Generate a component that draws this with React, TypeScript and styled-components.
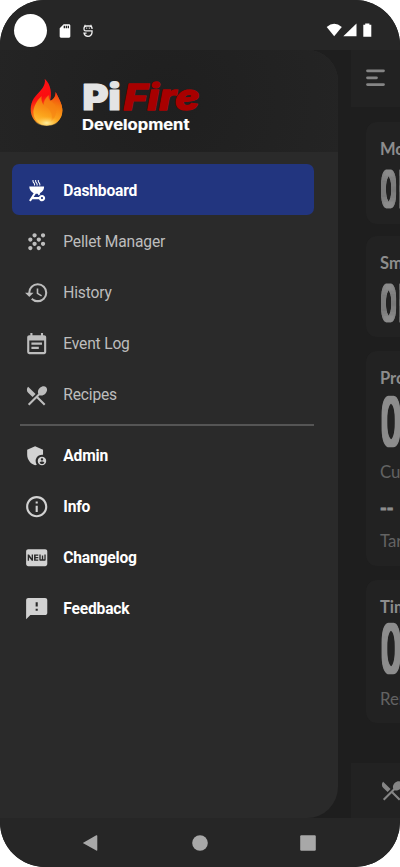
import React from "react";
import styled, { createGlobalStyle, css } from "styled-components";
import {
  MdAdminPanelSettings,
  MdEventNote,
  MdFeedback,
  MdFiberNew,
  MdGrain,
  MdHistory,
  MdInfoOutline,
  MdOutdoorGrill,
  MdRestaurantMenu,
  MdSdCard,
} from "react-icons/md";

const GlobalStyle = createGlobalStyle`
  * { box-sizing: border-box; }
  body { margin: 0; background: #fff; font-family: Roboto, "Liberation Sans", sans-serif; }
`;

const Phone = styled.div`
  width: 400px;
  height: 867px;
  display: flex;
  flex-direction: column;
  overflow: hidden;
  border-radius: 45px;
  background: #1e1e1e;
`;

const StatusBar = styled.header`
  flex: 0 0 50px;
  display: flex;
  align-items: flex-start;
  padding: 14px 28px 0 14px;
  background: #262626;
  color: #fff;
`;

const Camera = styled.div`
  width: 33px;
  height: 33px;
  margin-right: 10px;
  border-radius: 50%;
  background: #fff;
`;

const StatusGroup = styled.div<{ $end?: boolean }>`
  display: flex;
  align-items: center;
  height: 33px;
  gap: ${(p) => (p.$end ? 0 : 9)}px;
  ${(p) => p.$end && css`margin-left: auto;`}
  svg { display: block; }
`;

const Stage = styled.main`
  flex: 1;
  position: relative;
  min-height: 0;
  display: flex;
`;

const Drawer = styled.aside`
  position: absolute;
  inset: 0 auto 0 0;
  width: 338px;
  overflow: hidden;
  border-radius: 0 31px 31px 0;
  background: #2a2a2a;
`;

const Brand = styled.div`
  display: flex;
  height: 101.5px;
  padding: 27.5px 0 0 30px;
  background: radial-gradient(circle at 170px 50px, #1f1f1f 0, #242424 180px);
  svg { display: block; overflow: visible; }
`;

const Wordmark = styled.div`
  margin: 0.5px 0 0 16.6px;
`;

const Menu = styled.nav`
  padding: 12.8px 24px 0 12px;
`;

const MenuItem = styled.a<{ $active?: boolean; $strong?: boolean }>`
  display: flex;
  align-items: center;
  height: 51.15px;
  padding: 2px 0 0 12px;
  border-radius: 7px;
  background: ${(p) => (p.$active ? "#22357f" : "transparent")};
  color: ${(p) => (p.$active || p.$strong ? "#fff" : "#bdbdbd")};
  font-size: 15.6px;
  letter-spacing: -0.18px;
  font-weight: ${(p) => (p.$active || p.$strong ? 700 : 400)};
  svg {
    width: 25.4px;
    height: 25.4px;
    margin-right: 13.9px;
    color: ${(p) => (p.$active ? "#fff" : p.$strong ? "#d2d2d2" : "#bdbdbd")};
  }
`;

const Divider = styled.hr`
  height: 2px;
  margin: 3.7px 0 3.5px 8px;
  border: 0;
  background: #555;
`;

const Screen = styled.section`
  flex: 1;
  margin-left: 351px;
  display: flex;
  flex-direction: column;
  overflow: hidden;
  color: #8d8d8d;
`;

const TopBar = styled.div`
  flex: 0 0 57px;
  padding: 18px 0 0 14px;
  background: #222;
  svg { display: block; }
`;

const Cards = styled.div`
  flex: 1;
  display: flex;
  flex-direction: column;
  padding: 15px 0 0 14.5px;
`;

const Card = styled.article<{ $height: number; $gap: number }>`
  flex: 0 0 ${(p) => p.$height}px;
  width: 160px;
  margin-bottom: ${(p) => p.$gap}px;
  padding: 17px 0 0 14.5px;
  border-radius: 11px;
  background: #222;
  font-family: Lato, sans-serif;
`;

const CardTitle = styled.div<{ $tight?: boolean }>`
  height: ${(p) => (p.$tight ? 18 : 20)}px;
  font-size: 16.5px;
  line-height: 20px;
  font-weight: 700;
`;

const Reading = styled.div<{ $large?: boolean }>`
  height: ${(p) => (p.$large ? 74 : 55)}px;
  svg { display: block; overflow: visible; }
`;

const Caption = styled.div`
  height: 20px;
  font-size: 16.8px;
  line-height: 20px;
  color: #636363;
`;

const Target = styled.div`
  height: 49px;
  padding-top: 14px;
  font-size: 18px;
  line-height: 24px;
  font-weight: 900;
  -webkit-text-stroke: 0.8px #8d8d8d;
`;

const BottomBar = styled.div`
  flex: 0 0 55px;
  padding: 15px 0 0 27.5px;
  background: #222;
  svg { display: block; color: #858585; }
`;

const NavBar = styled.footer`
  flex: 0 0 49px;
  display: flex;
  align-items: center;
  padding: 0 84px 0 82px;
  justify-content: space-between;
  background: #262626;
`;

function Flame() {
  return (
    <svg width="33.4" height="48" viewBox="30 22 100 144">
      <defs>
        <linearGradient id="flameRed" x1="0" y1="0" x2="0.25" y2="1">
          <stop offset="0" stopColor="#ff1616" />
          <stop offset="0.45" stopColor="#fb0d10" />
          <stop offset="0.85" stopColor="#f58a18" />
        </linearGradient>
        <linearGradient id="flameOrange" x1="0.7" y1="0" x2="0.4" y2="1">
          <stop offset="0" stopColor="#f33a12" />
          <stop offset="0.35" stopColor="#f57b0e" />
          <stop offset="0.75" stopColor="#fca51c" />
          <stop offset="1" stopColor="#ffc33e" />
        </linearGradient>
        <radialGradient id="flameGlow" cx="0.5" cy="0.75" r="0.55">
          <stop offset="0" stopColor="#fff0a2" />
          <stop offset="1" stopColor="#ffbd36" stopOpacity="0" />
        </radialGradient>
      </defs>
      <path d="M74 24C79 44 61 60 47 76C31 94 28 119 37 139C45 156 61 164 80 164C108 164 127 146 127 119C127 99 115 82 107 64C107 80 99 87 90 90C96 71 94 42 74 24Z" fill="url(#flameRed)" />
      <path d="M107 64C107 80 99 88 90 91C85 88 85 80 86 72C78 83 72 91 71 103C65 96 63 86 65 76C48 91 40 112 40 125C41 150 59 164 80 164C108 164 127 146 127 119C127 99 115 82 107 64Z" fill="url(#flameOrange)" />
      <path d="M71 103C68 96 74 82 86 75C84 88 99 91 107 107C113 124 105 145 90 156C102 137 95 117 71 103Z" fill="#f58212" opacity="0.55" />
      <ellipse cx="80" cy="148" rx="36" ry="18" fill="url(#flameGlow)" />
    </svg>
  );
}

function Logo() {
  return (
    <svg width="130" height="56" viewBox="0 0 130 56">
      <g fontFamily="Inter, sans-serif" fontWeight="900" strokeLinejoin="round">
        <text x="2.6" y="31.7" fontSize="35.5" fill="#e4e4e4" stroke="#e4e4e4" strokeWidth="1.2" textLength="26" lengthAdjust="spacingAndGlyphs">P</text>
        <text x="28.2" y="31.7" fontSize="35.5" fill="#e4e4e4" stroke="#e4e4e4" strokeWidth="1.2" textLength="12.6" lengthAdjust="spacingAndGlyphs">i</text>
        <text x="43.4" y="31.7" fontSize="35.5" fontWeight="800" fontStyle="italic" textLength="76" lengthAdjust="spacingAndGlyphs" fill="#a80000" stroke="#a80000" strokeWidth="1.3">Fire</text>
        <text x="2" y="51.8" fontSize="14.8" fontWeight="700" textLength="107.5" lengthAdjust="spacingAndGlyphs" fill="#fff" stroke="#fff" strokeWidth="0.2">Development</text>
      </g>
    </svg>
  );
}

function StatusGlyph() {
  return (
    <svg width="12" height="14" viewBox="0 0 12 14" fill="none" stroke="#eee" strokeWidth="1.3">
      <path d="M2.6 0.8L3.4 1.8M9.4 0.8L8.6 1.8" />
      <path d="M10 5V4.2Q10 2 7.6 2H4.4Q2 2 2 4.2V5.2Q2 6.9 3.6 6.9H10V8.6Q9.6 12 6 12.4Q2.6 12.2 2 9.2H4.6" />
      <path d="M4.2 4.2H5.2M6.8 4.2H7.8" />
    </svg>
  );
}

type ReadingTextProps = { text: string; large?: boolean };

function ReadingText({ text, large }: ReadingTextProps) {
  return (
    <Reading $large={large}>
      <svg width="60" height={large ? 58 : 50}>
        <filter id="heavy" filterUnits="userSpaceOnUse" x="-6" y="-6" width="80" height="80">
          <feMorphology operator="dilate" radius="2 2" />
        </filter>
        <g filter="url(#heavy)">
          <text
            transform={large ? "translate(2 55.6) scale(0.52 1)" : "translate(2 47) scale(0.41 1)"}
            fontFamily="Roboto, sans-serif"
            fontWeight="100"
            fontSize={large ? 63.5 : 48.5}
            letterSpacing={large ? 4 : 11}
            fill="#8d8d8d"
            stroke="#8d8d8d"
            strokeWidth={large ? 1.6 : 0.8}
          >
            {text}
          </text>
        </g>
      </svg>
    </Reading>
  );
}

const primary = [
  { label: "Dashboard", Icon: MdOutdoorGrill, active: true },
  { label: "Pellet Manager", Icon: MdGrain },
  { label: "History", Icon: MdHistory },
  { label: "Event Log", Icon: MdEventNote },
  { label: "Recipes", Icon: MdRestaurantMenu },
];

const secondary = [
  { label: "Admin", Icon: MdAdminPanelSettings },
  { label: "Info", Icon: MdInfoOutline },
  { label: "Changelog", Icon: MdFiberNew },
  { label: "Feedback", Icon: MdFeedback },
];

export default function App() {
  return (
    <>
      <GlobalStyle />
      <Phone>
        <StatusBar>
          <Camera />
          <StatusGroup>
            <MdSdCard size={16} />
            <StatusGlyph />
          </StatusGroup>
          <StatusGroup $end>
            <svg width="46" height="15" viewBox="0 0 46 15" fill="#fff">
              <path d="M0.7 4Q8.2-2.4 15.8 4L8.2 13.2Z" />
              <path d="M17.3 13.2L30.5 0.5V13.2Z" />
              <path d="M37.3 1.8H39.2V0.5H43.4V1.8H45.3V13.8H37.3Z" />
            </svg>
          </StatusGroup>
        </StatusBar>
        <Stage>
          <Screen>
            <TopBar>
              <svg width="22" height="18" viewBox="0 0 22 18" stroke="#858585" strokeWidth="2.8" strokeLinecap="round">
                <path d="M2.5 2.8H18.5M2.5 9.8H11.5M2.5 16.6H18.5" />
              </svg>
            </TopBar>
            <Cards>
              <Card $height={101.5} $gap={12}>
                <CardTitle>Mode</CardTitle>
                <ReadingText text="OFF" />
              </Card>
              <Card $height={101.5} $gap={14}>
                <CardTitle>Smoke</CardTitle>
                <ReadingText text="OFF" />
              </Card>
              <Card $height={215} $gap={14}>
                <CardTitle>Probe</CardTitle>
                <ReadingText text="0" large />
                <Caption>Current</Caption>
                <Target>--</Target>
                <Caption>Target</Caption>
              </Card>
              <Card $height={143} $gap={0}>
                <CardTitle $tight>Timer</CardTitle>
                <ReadingText text="0" large />
                <Caption>Remaining</Caption>
              </Card>
            </Cards>
            <BottomBar>
              <MdRestaurantMenu size={25.4} />
            </BottomBar>
          </Screen>
          <Drawer>
            <Brand>
              <Flame />
              <Wordmark>
                <Logo />
              </Wordmark>
            </Brand>
            <Menu>
              {primary.map(({ label, Icon, active }) => (
                <MenuItem key={label} $active={active}>
                  <Icon />
                  {label}
                </MenuItem>
              ))}
              <Divider />
              {secondary.map(({ label, Icon }) => (
                <MenuItem key={label} $strong>
                  <Icon />
                  {label}
                </MenuItem>
              ))}
            </Menu>
          </Drawer>
        </Stage>
        <NavBar>
          <svg width="17" height="18" viewBox="0 0 17 18" fill="#a8a8a8">
            <path d="M0.8 9L14.3 1.3Q15.3 0.8 15.3 2V16Q15.3 17.2 14.3 16.6Z" />
          </svg>
          <svg width="16" height="16" viewBox="0 0 16 16" fill="#a8a8a8">
            <circle cx="8" cy="8" r="7.8" />
          </svg>
          <svg width="16" height="16" viewBox="0 0 16 16" fill="#a8a8a8">
            <rect x="0.2" y="0.2" width="15.6" height="15.6" rx="1.2" />
          </svg>
        </NavBar>
      </Phone>
    </>
  );
}
